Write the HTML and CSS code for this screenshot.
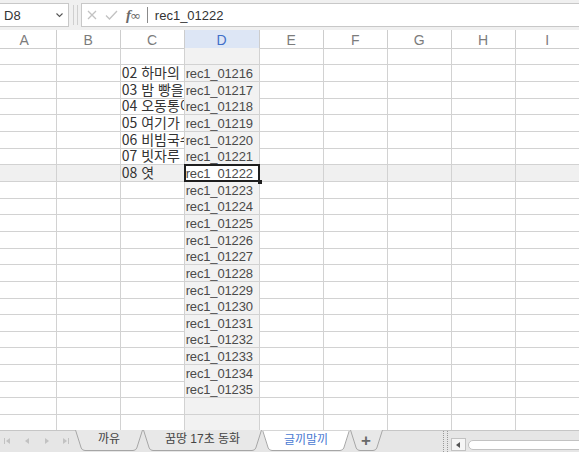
FILE: index.html
```html
<!DOCTYPE html>
<html lang="ko">
<head>
<meta charset="utf-8">
<title>Sheet</title>
<link rel="stylesheet" href="styles.css">
</head>
<body>
<div class="app">
  <div class="toolbar">
    <div class="namebox">
      <span>D8</span>
      <svg class="chev" width="7" height="5" viewBox="0 0 7 5"><polyline points="0.5,0.5 3.5,3.5 6.5,0.5" fill="none" stroke="#555" stroke-width="1.1"/></svg>
    </div>
    <div class="grip"><span></span></div>
    <div class="formula">
      <svg class="ico-x" width="10" height="10" viewBox="0 0 10 10"><path d="M1 1 L9 9 M9 1 L1 9" stroke="#c2c2c2" stroke-width="1.3" fill="none"/></svg>
      <svg class="ico-ok" width="13" height="10" viewBox="0 0 13 10"><path d="M1 5.5 L4.5 9 L12 1" stroke="#c2c2c2" stroke-width="1.3" fill="none"/></svg>
      <span class="fx"><i>f</i><span>∞</span></span>
      <span class="fsep"></span>
      <span class="ftext">rec1_01222</span>
    </div>
  </div>

  <div class="sheet">
    <div class="row head"><div>A</div><div>B</div><div>C</div><div class="hd">D</div><div>E</div><div>F</div><div>G</div><div>H</div><div>I</div></div>
    <div class="row"><div></div><div></div><div></div><div></div><div></div><div></div><div></div><div></div><div></div></div>
    <div class="row"><div></div><div></div><div class="ko">02 하마의 하루</div><div>rec1_01216</div><div></div><div></div><div></div><div></div><div></div></div>
    <div class="row"><div></div><div></div><div class="ko">03 밤 빵을 먹어요</div><div>rec1_01217</div><div></div><div></div><div></div><div></div><div></div></div>
    <div class="row"><div></div><div></div><div class="ko">04 오동통이</div><div>rec1_01218</div><div></div><div></div><div></div><div></div><div></div></div>
    <div class="row"><div></div><div></div><div class="ko">05 여기가 어디지</div><div>rec1_01219</div><div></div><div></div><div></div><div></div><div></div></div>
    <div class="row"><div></div><div></div><div class="ko">06 비빔국수</div><div>rec1_01220</div><div></div><div></div><div></div><div></div><div></div></div>
    <div class="row"><div></div><div></div><div class="ko">07 빗자루 친구</div><div>rec1_01221</div><div></div><div></div><div></div><div></div><div></div></div>
    <div class="row selrow"><div></div><div></div><div class="ko">08 엿</div><div class="cur">rec1_01222</div><div></div><div></div><div></div><div></div><div></div></div>
    <div class="row"><div></div><div></div><div></div><div>rec1_01223</div><div></div><div></div><div></div><div></div><div></div></div>
    <div class="row"><div></div><div></div><div></div><div>rec1_01224</div><div></div><div></div><div></div><div></div><div></div></div>
    <div class="row"><div></div><div></div><div></div><div>rec1_01225</div><div></div><div></div><div></div><div></div><div></div></div>
    <div class="row"><div></div><div></div><div></div><div>rec1_01226</div><div></div><div></div><div></div><div></div><div></div></div>
    <div class="row"><div></div><div></div><div></div><div>rec1_01227</div><div></div><div></div><div></div><div></div><div></div></div>
    <div class="row"><div></div><div></div><div></div><div>rec1_01228</div><div></div><div></div><div></div><div></div><div></div></div>
    <div class="row"><div></div><div></div><div></div><div>rec1_01229</div><div></div><div></div><div></div><div></div><div></div></div>
    <div class="row"><div></div><div></div><div></div><div>rec1_01230</div><div></div><div></div><div></div><div></div><div></div></div>
    <div class="row"><div></div><div></div><div></div><div>rec1_01231</div><div></div><div></div><div></div><div></div><div></div></div>
    <div class="row"><div></div><div></div><div></div><div>rec1_01232</div><div></div><div></div><div></div><div></div><div></div></div>
    <div class="row"><div></div><div></div><div></div><div>rec1_01233</div><div></div><div></div><div></div><div></div><div></div></div>
    <div class="row"><div></div><div></div><div></div><div>rec1_01234</div><div></div><div></div><div></div><div></div><div></div></div>
    <div class="row"><div></div><div></div><div></div><div>rec1_01235</div><div></div><div></div><div></div><div></div><div></div></div>
    <div class="row"><div></div><div></div><div></div><div></div><div></div><div></div><div></div><div></div><div></div></div>
    <div class="row"><div></div><div></div><div></div><div></div><div></div><div></div><div></div><div></div><div></div></div>
  </div>

  <div class="tabbar">
    <svg class="nav" width="75" height="22" viewBox="0 0 75 22">
      <g fill="#c2c2c2">
        <rect x="4" y="8" width="1" height="6"/>
        <polygon points="10,8 6,11 10,14"/>
        <polygon points="29,8 25,11 29,14"/>
        <polygon points="45,8 49,11 45,14"/>
        <polygon points="63,8 67,11 63,14"/>
        <rect x="68" y="8" width="1" height="6"/>
      </g>
    </svg>
    <div class="tabs">
      <div class="tab t1">
        <svg class="tabshape" width="68" height="22" viewBox="0 0 68 22"><path d="M0 0 L6 18 Q7 21 10 21 L58 21 Q61 21 62 18 L68 0 Z" fill="#e8e8e8"/><path d="M0.5 0 L6.2 18 Q7.2 20.5 10 20.5 L58 20.5 Q60.8 20.5 61.8 18 L67.5 0" fill="none" stroke="#a6a6a6"/></svg>
        <span class="lbl">까유</span>
      </div>
      <div class="tab t2">
        <svg class="tabshape" width="119" height="22" viewBox="0 0 119 22"><path d="M0 0 L6 18 Q7 21 10 21 L109 21 Q112 21 113 18 L119 0 Z" fill="#e8e8e8"/><path d="M0.5 0 L6.2 18 Q7.2 20.5 10 20.5 L109 20.5 Q111.8 20.5 112.8 18 L118.5 0" fill="none" stroke="#a6a6a6"/></svg>
        <span class="lbl">꿈땅 17초 동화</span>
      </div>
      <div class="tab t3 active">
        <svg class="tabshape" width="88" height="22" viewBox="0 0 88 22"><path d="M0 0 L6 18 Q7 21 10 21 L78 21 Q81 21 82 18 L88 0 Z" fill="#ffffff"/><path d="M0.5 0 L6.2 18 Q7.2 20.5 10 20.5 L78 20.5 Q80.8 20.5 81.8 18 L87.5 0" fill="none" stroke="#a6a6a6"/><rect x="0" y="0" width="88" height="1" fill="#d6d6d6"/></svg>
        <span class="lbl">글끼말끼</span>
      </div>
      <div class="tab t4">
        <svg class="tabshape" width="33" height="22" viewBox="0 0 33 22"><path d="M0 0 L6 18 Q7 21 10 21 L23 21 Q26 21 27 18 L33 0 Z" fill="#e8e8e8"/><path d="M0.5 0 L6.2 18 Q7.2 20.5 10 20.5 L23 20.5 Q25.8 20.5 26.8 18 L32.5 0" fill="none" stroke="#a6a6a6"/></svg>
        <span class="lbl plus">+</span>
      </div>
    </div>
    <div class="spacer"></div>
    <div class="hscroll">
      <div class="hgrip"></div>
      <div class="sbtn"><svg width="5" height="6" viewBox="0 0 5 6"><polygon points="4,0 0,3 4,6" fill="#555"/></svg></div>
      <div class="track"></div>
    </div>
  </div>
</div>
</body>
</html>
```

FILE: styles.css
```css
* { box-sizing: border-box; margin: 0; padding: 0; }

html, body {
  width: 579px;
  height: 452px;
  overflow: hidden;
  background: #ffffff;
}

body {
  font-family: "Liberation Sans", "Noto Sans CJK KR", sans-serif;
  color: #333333;
}

.app {
  display: flex;
  flex-direction: column;
  height: 452px;
  width: 579px;
  overflow: hidden;
}

/* ---------- toolbar ---------- */
.toolbar {
  flex: none;
  height: 30px;
  display: flex;
  align-items: flex-start;
  padding-top: 3px;
  background: #f0f0f0;
}

.namebox {
  width: 70px;
  height: 24px;
  margin-left: -1px;
  background: #ffffff;
  border: 1px solid #c8c8c8;
  display: flex;
  align-items: center;
  justify-content: space-between;
  padding: 0 5px 0 4px;
  font-size: 13px;
  color: #333333;
}

.chev { display: block; margin-top: 1px; }

.grip {
  width: 12px;
  height: 24px;
  display: flex;
  justify-content: center;
  align-items: center;
}

.grip span {
  width: 5px;
  height: 20px;
  border-left: 1px solid #cfcfcf;
  border-right: 1px solid #cfcfcf;
}

.formula {
  flex: 1;
  height: 24px;
  background: #ffffff;
  border: 1px solid #c8c8c8;
  border-right: none;
  display: flex;
  align-items: center;
  padding-left: 5px;
}

.ico-x { display: block; }
.ico-ok { display: block; margin-left: 8px; }

.fx {
  margin-left: 8px;
  font-family: "Liberation Serif", serif;
  font-size: 15px;
  color: #6a6a6a;
  display: flex;
  align-items: baseline;
  letter-spacing: -1px;
}
.fx i { font-style: italic; font-weight: bold; }
.fx span { font-size: 13px; font-family: "DejaVu Sans", sans-serif; }

.fsep {
  width: 1px;
  height: 16px;
  background: #8a8a8a;
  margin-left: 7px;
}

.ftext {
  margin-left: 7px;
  font-size: 13px;
  color: #333333;
}

/* ---------- sheet ---------- */
.sheet {
  flex: 1;
  overflow: hidden;
  margin-left: -7.33px;
  width: 590px;
}

.row {
  display: grid;
  grid-template-columns: 64px 64px 64px 75px 64px 64px 64px 64px 64px;
  height: 16.67px;
}

.row > div {
  border-right: 1px solid #d2d2d2;
  border-bottom: 1px solid #d2d2d2;
  overflow-x: clip;
  overflow-y: visible;
  white-space: nowrap;
  font-size: 13px;
  line-height: 15px;
  padding: 1px 0 0 1px;
  color: #4a4a4a;
  letter-spacing: -0.15px;
}

.row > div:nth-child(4) { background: #f2f2f2; }

.row > div.ko {
  font-family: "Noto Sans CJK KR", sans-serif;
  font-size: 14px;
  letter-spacing: 0;
  color: #333333;
  padding-top: 0;
}

.selrow > div { background: #f0f0f0; }

.row > div.cur {
  background: #ffffff;
  position: relative;
  overflow: visible;
}

.cur::after {
  content: "";
  position: absolute;
  left: -1px;
  top: -1px;
  right: -1px;
  bottom: -1px;
  border: 2px solid #1f1f1f;
}

.cur::before {
  content: "";
  position: absolute;
  right: -3px;
  bottom: -3px;
  width: 4px;
  height: 4px;
  background: #1f1f1f;
  z-index: 1;
}

.head { height: 18.33px; }

.head > div {
  text-align: center;
  font-size: 14px;
  line-height: 16px;
  padding: 1.5px 0 0 0;
  color: #7c7c7c;
  background: #ffffff;
  border-color: #cdcdcd;
  letter-spacing: 0;
}

.head > div:nth-child(4).hd {
  background: #dde6f5;
  color: #3f6fc8;
}

/* ---------- tab bar ---------- */
.tabbar {
  flex: none;
  height: 22px;
  display: flex;
  background: #e6e6e6;
  box-shadow: inset 0 1px #c6c6c6;
}

.nav { display: block; flex: none; }

.tabs {
  display: flex;
  flex: none;
}

.tab {
  position: relative;
  height: 22px;
  display: flex;
  justify-content: center;
}

.t1 { width: 68px; }
.t2 { width: 119px; }
.t3 { width: 88px; }
.t4 { width: 33px; }

.tabshape {
  position: absolute;
  left: 0;
  top: 0;
  display: block;
}

.lbl {
  position: relative;
  font-size: 12px;
  line-height: 14px;
  padding-top: 2px;
  color: #444444;
}

.active .lbl {
  padding-top: 3px;
  color: #4a7ad2;
}

.lbl.plus {
  font-size: 17px;
  font-weight: bold;
  line-height: 16px;
  padding-top: 3px;
  color: #6a6a6a;
  margin-right: 1px;
}

.spacer { flex: 1; }

.hscroll {
  flex: none;
  width: 137px;
  display: flex;
  align-items: flex-start;
}

.hgrip {
  width: 5px;
  height: 21px;
  margin: 1px 0 0 1px;
  border-left: 1px dotted #9a9a9a;
  border-right: 1px dotted #9a9a9a;
}

.sbtn {
  width: 15px;
  height: 13px;
  margin: 8px 0 0 3px;
  background: #f6f6f6;
  border: 1px solid #c2c2c2;
  display: flex;
  align-items: center;
  justify-content: center;
}

.sbtn svg { display: block; }

.track {
  flex: 1;
  height: 10px;
  margin: 10px -10px 0 2px;
  background: #ffffff;
  border: 1px solid #c2c2c2;
  border-radius: 5px;
}
```
